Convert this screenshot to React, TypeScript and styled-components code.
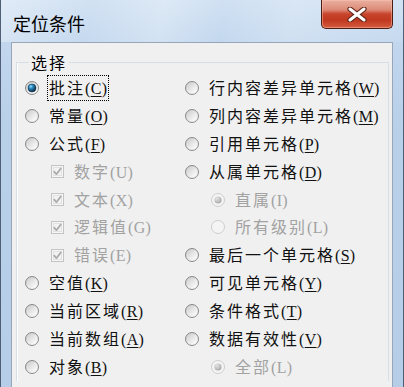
import React from "react";
import styled, { createGlobalStyle } from "styled-components";

const Global = createGlobalStyle`
  html, body {
    margin: 0;
    padding: 0;
    width: 404px;
    height: 387px;
    overflow: hidden;
    background: #bcd2ea;
  }
  body {
    font-family: "Noto Sans CJK SC", sans-serif;
  }
`;

const Window = styled.div`
  display: flex;
  flex-direction: column;
  width: 404px;
  height: 430px;
  box-sizing: border-box;
  border-left: 1px solid #4f6076;
  border-right: 1px solid #4f6076;
  background:
    linear-gradient(100deg,
      rgba(255,255,255,0.35) 0%,
      rgba(255,255,255,0.05) 22%,
      rgba(255,255,255,0.28) 40%,
      rgba(255,255,255,0.02) 55%,
      rgba(255,255,255,0.22) 72%,
      rgba(255,255,255,0.05) 100%) top / 100% 42px no-repeat,
    linear-gradient(to bottom, #cfe0f2 0px, #c2d7ee 42px, #b9d0e9 120px, #b6cde8 100%);
`;

const TitleBar = styled.div`
  display: flex;
  align-items: flex-start;
  height: 42px;
  flex: none;
`;

const Title = styled.div`
  margin: 11px 0 0 12px;
  font-family: "Noto Sans CJK SC", sans-serif;
  font-size: 18px;
  line-height: 24px;
  color: #000;
`;

const CloseButton = styled.div`
  margin-left: auto;
  margin-right: 10px;
  width: 72px;
  height: 29px;
  box-sizing: border-box;
  display: flex;
  align-items: center;
  justify-content: center;
  border: 1px solid #4a1d14;
  border-top: none;
  border-radius: 0 0 5px 5px;
  background: linear-gradient(to bottom,
    #eab0a2 0%, #dc8a76 35%, #c8442c 50%, #c03820 72%, #d65c3e 100%);
  box-shadow: inset 0 0 0 1px rgba(255, 200, 180, 0.45);
`;

const Client = styled.div`
  flex: 1;
  margin: 0 10px;
  border: 1px solid #97a6b8;
  background: #f0f0f0;
  display: flex;
  flex-direction: column;
`;

const GroupBox = styled.fieldset`
  margin: 8px 3px 0 4px;
  padding: 1px 0 0 8px;
  min-width: 0;
  border: 1px solid #d5dfe5;
  border-bottom: none;
  box-shadow: inset 1px 0 #fff;
`;

const Legend = styled.legend`
  margin-left: 4px;
  padding: 0 2px;
  font-size: 16px;
  line-height: 22px;
  letter-spacing: 2px;
  color: #000;
`;

const Options = styled.div`
  display: grid;
  grid-template-columns: 160px 1fr;
  grid-template-rows: repeat(11, 27.9px);
  grid-auto-flow: column;
`;

const Option = styled.label<{ $indent: boolean; $disabled: boolean }>`
  display: flex;
  align-items: center;
  gap: 10px;
  padding-left: ${(p) => (p.$indent ? "26px" : "0")};
  color: ${(p) => (p.$disabled ? "#a2a2a2" : "#111")};
  white-space: nowrap;
`;

const Caption = styled.span<{ $focus: boolean }>`
  display: inline-flex;
  align-items: baseline;
  font-size: 16px;
  line-height: 20px;
  outline: ${(p) => (p.$focus ? "1px dotted #000" : "none")};
  outline-offset: 1px;
`;

const Han = styled.span`
  font-family: "Noto Sans CJK SC", sans-serif;
  letter-spacing: 2px;
`;

const Key = styled.span`
  font-family: "Liberation Serif", serif;
  font-size: 16px;
  letter-spacing: 0.3px;
`;

const Under = styled.span<{ $on: boolean }>`
  text-decoration: ${(p) => (p.$on ? "underline" : "none")};
  text-decoration-thickness: 1px;
  text-underline-offset: 2px;
`;

const ControlSvg = styled.svg`
  flex: none;
  display: block;
`;

function Radio({ checked, disabled }: { checked?: boolean; disabled?: boolean }) {
  return (
    <ControlSvg width="14" height="14" viewBox="0 0 14 14">
      <defs>
        <radialGradient id="rOuter" cx="0.65" cy="0.7" r="0.7">
          <stop offset="0" stopColor="#fbfbfb" />
          <stop offset="0.6" stopColor="#ececec" />
          <stop offset="1" stopColor="#cfcfcf" />
        </radialGradient>
        <linearGradient id="rInner" x1="0" y1="0" x2="1" y2="1">
          <stop offset="0" stopColor="#cdcdcd" />
          <stop offset="1" stopColor="#fafafa" />
        </linearGradient>
        <radialGradient id="rDot" cx="0.35" cy="0.3" r="0.75">
          <stop offset="0" stopColor="#8fe0ff" />
          <stop offset="0.35" stopColor="#2c8cc0" />
          <stop offset="0.75" stopColor="#14476c" />
          <stop offset="1" stopColor="#0b2a44" />
        </radialGradient>
        <radialGradient id="rDotDis" cx="0.35" cy="0.3" r="0.75">
          <stop offset="0" stopColor="#e2e2e2" />
          <stop offset="1" stopColor="#a9a9a9" />
        </radialGradient>
      </defs>
      {disabled ? (
        <>
          <circle cx="7" cy="7" r="6.5" fill="#f4f4f4" stroke="#cdcdcd" />
          {checked && <circle cx="7" cy="7" r="3.6" fill="url(#rDotDis)" />}
        </>
      ) : (
        <>
          <circle cx="7" cy="7" r="6.5" fill="url(#rOuter)" stroke="#8b8b8b" />
          {checked ? (
            <circle cx="7" cy="7" r="4" fill="url(#rDot)" stroke="#0d2f4a" strokeWidth="0.6" />
          ) : (
            <circle cx="7" cy="7" r="4.2" fill="url(#rInner)" opacity="0.7" />
          )}
        </>
      )}
    </ControlSvg>
  );
}

function Check() {
  return (
    <ControlSvg width="13" height="13" viewBox="0 0 13 13">
      <rect x="0.5" y="0.5" width="12" height="12" fill="#f6f6f6" stroke="#c3c3c3" />
      <rect x="2.5" y="2.5" width="8" height="8" fill="#f2f2f2" stroke="#e2e2e2" />
      <path d="M3.2 6.6 L5.4 9.2 L9.8 3.4" fill="none" stroke="#a9a9a9" strokeWidth="1.7" strokeLinecap="round" strokeLinejoin="round" />
    </ControlSvg>
  );
}

type Item = {
  label: string;
  k: string;
  kind: "radio" | "check";
  checked?: boolean;
  disabled?: boolean;
  indent?: boolean;
  focus?: boolean;
};

const items: Item[] = [
  { label: "批注", k: "C", kind: "radio", checked: true, focus: true },
  { label: "常量", k: "O", kind: "radio" },
  { label: "公式", k: "F", kind: "radio" },
  { label: "数字", k: "U", kind: "check", checked: true, disabled: true, indent: true },
  { label: "文本", k: "X", kind: "check", checked: true, disabled: true, indent: true },
  { label: "逻辑值", k: "G", kind: "check", checked: true, disabled: true, indent: true },
  { label: "错误", k: "E", kind: "check", checked: true, disabled: true, indent: true },
  { label: "空值", k: "K", kind: "radio" },
  { label: "当前区域", k: "R", kind: "radio" },
  { label: "当前数组", k: "A", kind: "radio" },
  { label: "对象", k: "B", kind: "radio" },
  { label: "行内容差异单元格", k: "W", kind: "radio" },
  { label: "列内容差异单元格", k: "M", kind: "radio" },
  { label: "引用单元格", k: "P", kind: "radio" },
  { label: "从属单元格", k: "D", kind: "radio" },
  { label: "直属", k: "I", kind: "radio", checked: true, disabled: true, indent: true },
  { label: "所有级别", k: "L", kind: "radio", disabled: true, indent: true },
  { label: "最后一个单元格", k: "S", kind: "radio" },
  { label: "可见单元格", k: "Y", kind: "radio" },
  { label: "条件格式", k: "T", kind: "radio" },
  { label: "数据有效性", k: "V", kind: "radio" },
  { label: "全部", k: "L", kind: "radio", checked: true, disabled: true, indent: true },
];

export default function App() {
  return (
    <>
      <Global />
      <Window>
        <TitleBar>
          <Title>定位条件</Title>
          <CloseButton>
            <svg width="22" height="15" viewBox="0 0 22 15">
              <path d="M4 2 L18 13 M18 2 L4 13" stroke="#5b2418" strokeWidth="5.2" strokeLinecap="round" />
              <path d="M4 2 L18 13 M18 2 L4 13" stroke="#fff" strokeWidth="3" strokeLinecap="round" />
            </svg>
          </CloseButton>
        </TitleBar>
        <Client>
          <GroupBox>
            <Legend>选择</Legend>
            <Options>
              {items.map((it, i) => (
                <Option key={i} $indent={!!it.indent} $disabled={!!it.disabled}>
                  {it.kind === "radio" ? (
                    <Radio checked={it.checked} disabled={it.disabled} />
                  ) : (
                    <Check />
                  )}
                  <Caption $focus={!!it.focus}>
                    <Han>{it.label}</Han>
                    <Key>
                      (<Under $on={!it.disabled}>{it.k}</Under>)
                    </Key>
                  </Caption>
                </Option>
              ))}
            </Options>
          </GroupBox>
        </Client>
      </Window>
    </>
  );
}
